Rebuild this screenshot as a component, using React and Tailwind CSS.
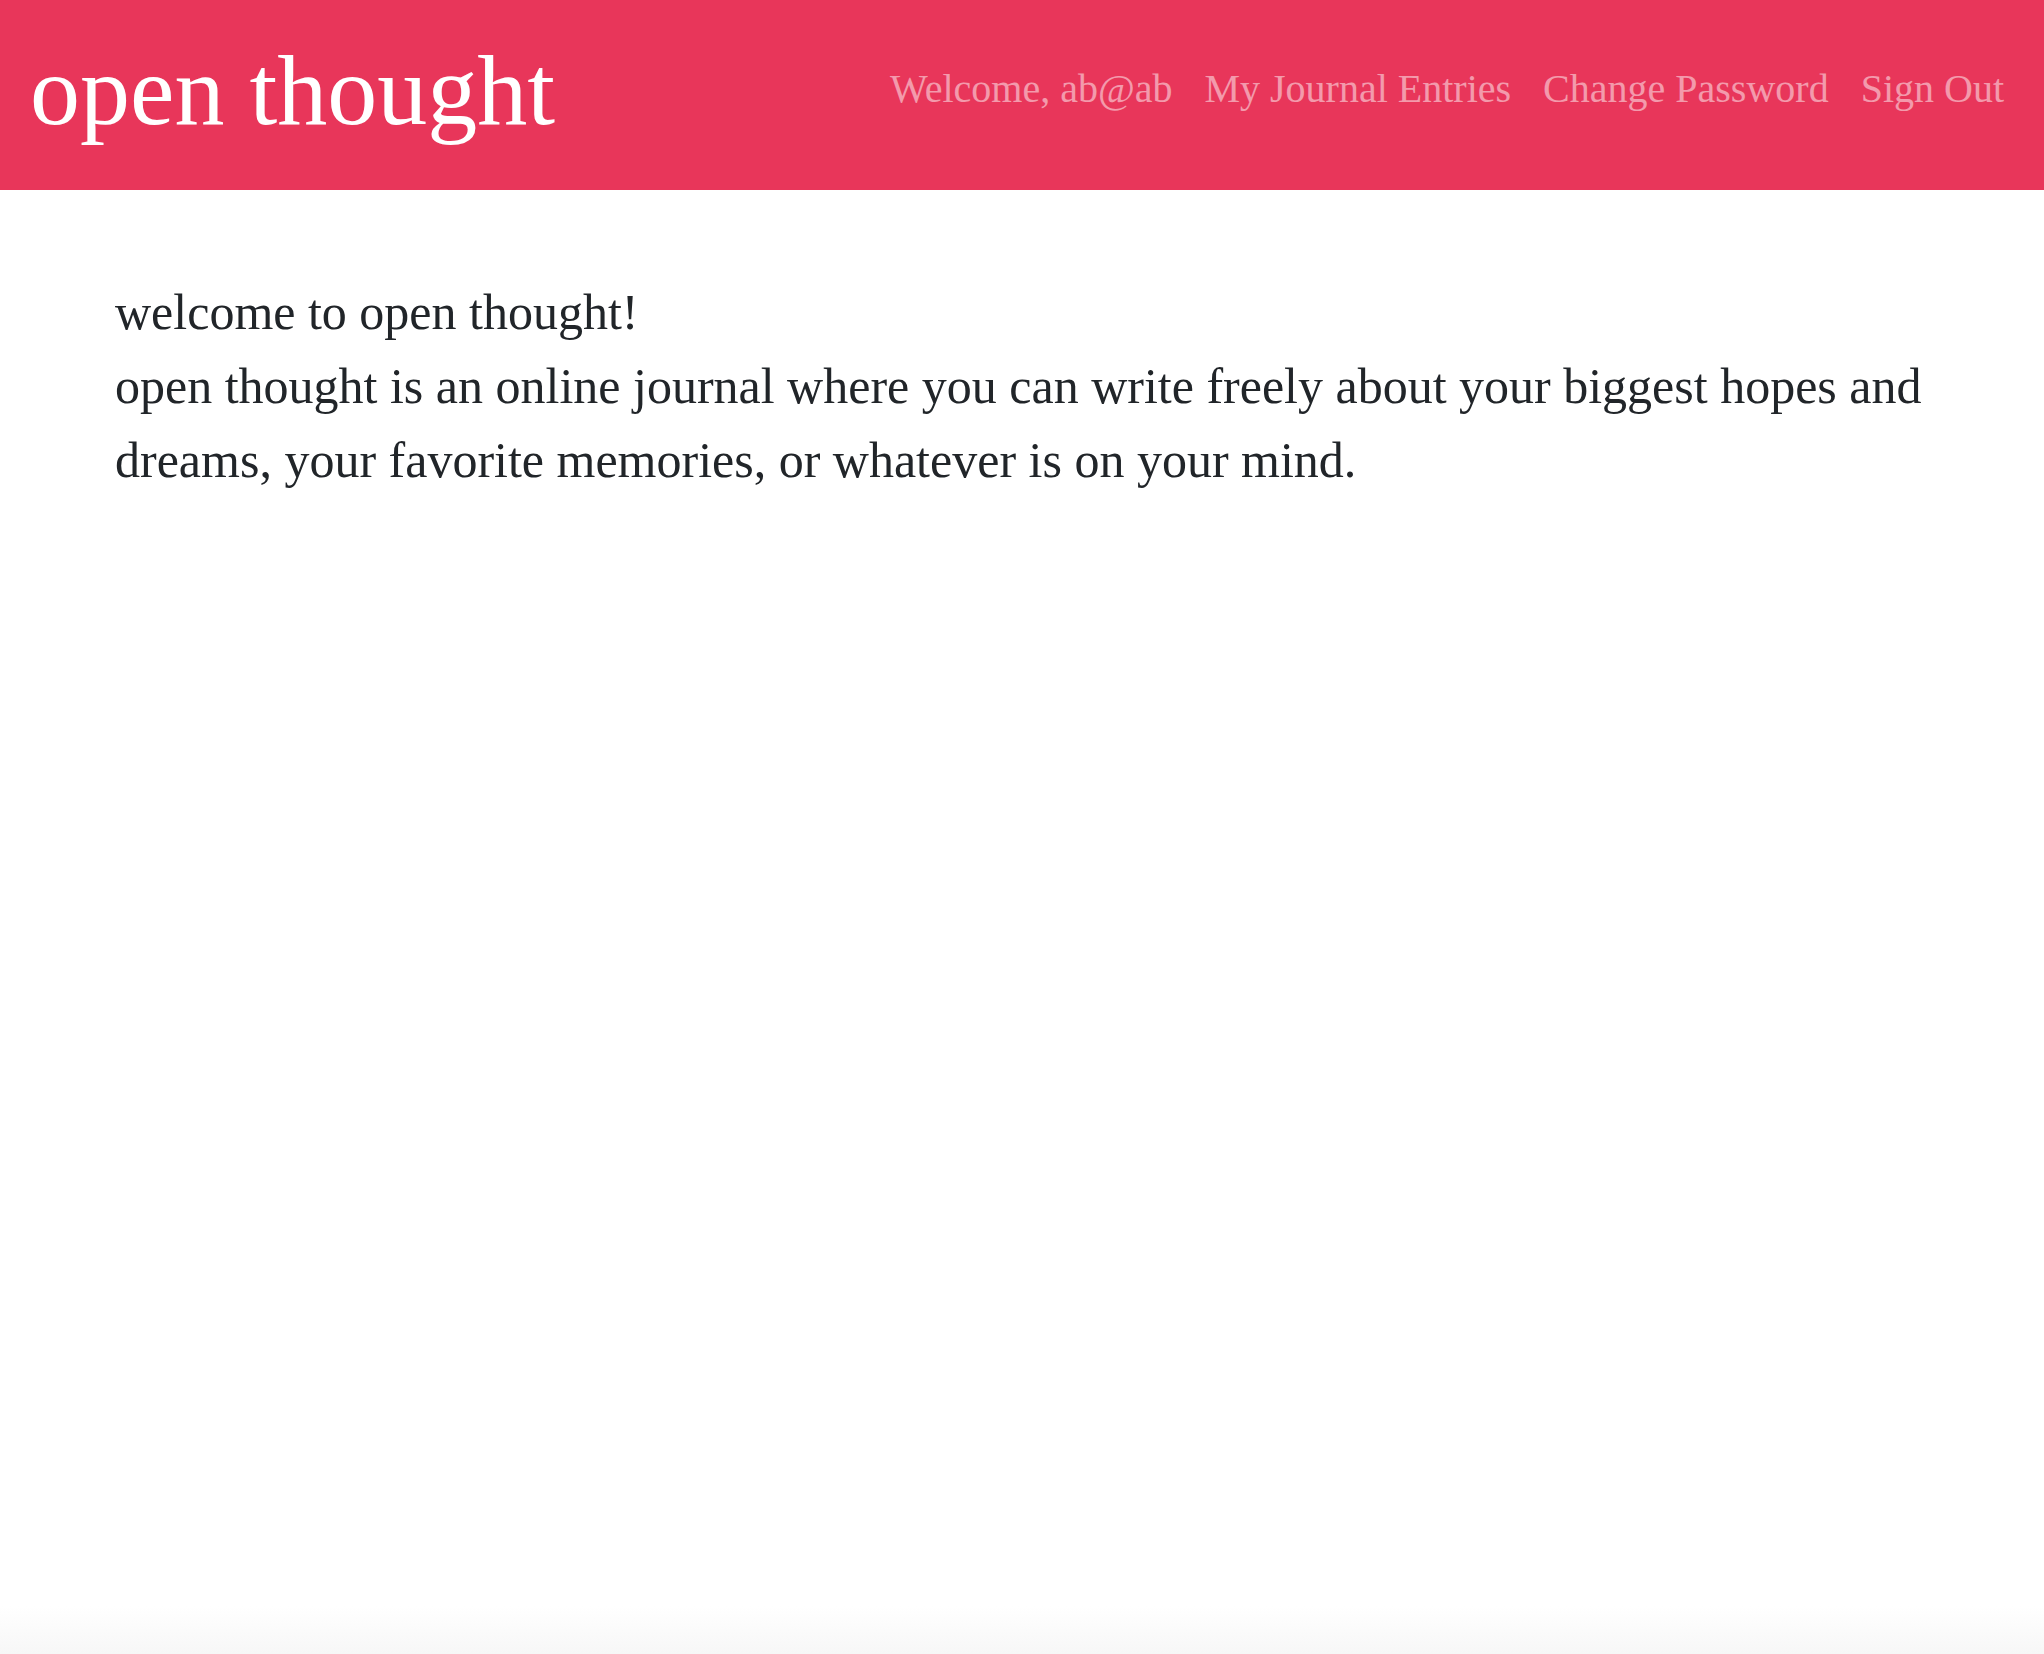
// App.jsx
const navLinks = ["Welcome, ab@ab", "My Journal Entries", "Change Password", "Sign Out"];

const Header = () => {
  return (
    <header className="flex h-[190px] items-center justify-between bg-[#e8365a] pl-[30px] pr-[24px]">
      <h1 className="-mt-[8px] text-[100px] leading-none text-white">open thought</h1>
      <nav className="-mt-[12px] flex items-center">
        {navLinks.map((link) => (
          <a
            key={link}
            href="#"
            className="px-[16px] text-[40px] leading-[1.5] text-white/50 hover:text-white/75"
          >
            {link}
          </a>
        ))}
      </nav>
    </header>
  );
};

const App = () => {
  return (
    <div
      className="flex min-h-screen flex-col bg-white text-[#212529]"
      style={{ fontFamily: '"Liberation Serif", "Times New Roman", serif' }}
    >
      <Header />

      {/* intro text */}
      <main className="flex-1 px-[115px] pt-[85px]">
        <p className="text-[50px] leading-[1.48]">welcome to open thought!</p>
        <p className="text-[50px] leading-[1.48]">
          open thought is an online journal where you can write freely about your biggest hopes and
          dreams, your favorite memories, or whatever is on your mind.
        </p>
      </main>

      <div className="h-[48px] bg-gradient-to-b from-white to-[#f7f7f7]" />
    </div>
  );
};

export default App;
